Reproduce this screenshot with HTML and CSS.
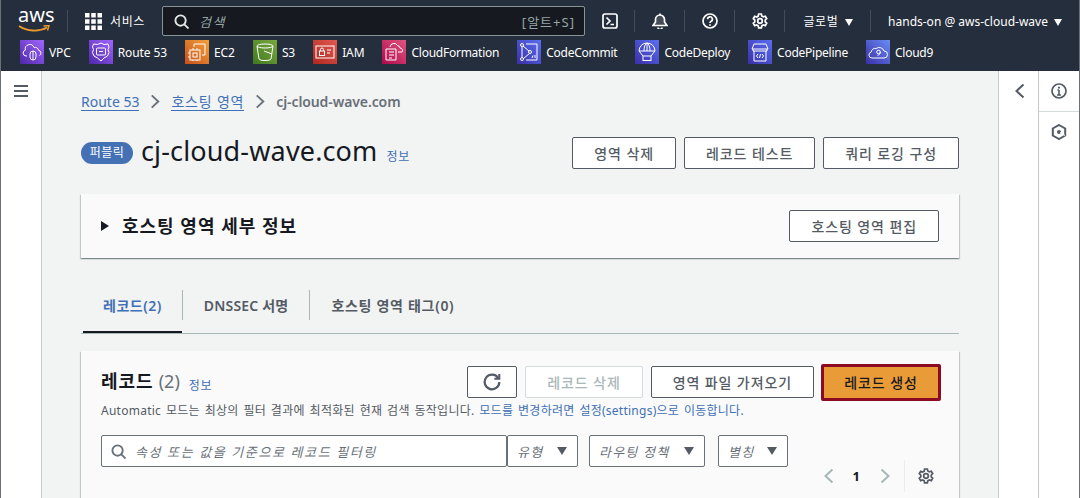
FILE: index.html
```html
<!DOCTYPE html>
<html lang="ko">
<head>
    <meta charset="UTF-8">
    <title>cj-cloud-wave.com - Route 53</title>
    <link rel="stylesheet" href="styles.css">
</head>
<body>
    <!-- 상단 내비게이션 -->
    <header class="topnav">
        <div class="nav-main">
            <div class="aws-logo">
                <span class="aws-word">aws</span>
                <svg class="aws-smile" viewBox="0 0 32 8"><path d="M1 1c8 5.500 20 6 28 1.500" fill="none" stroke="#ec9a2e" stroke-width="1.800"/><path d="M25.500 1 31 .6 29.500 5.500" fill="none" stroke="#ec9a2e" stroke-width="1.500"/></svg>
            </div>
            <span class="nav-sep sep-logo"></span>
            <svg class="grid-icon" viewBox="0 0 17 17" fill="#fff"><rect width="4.500" height="4.500"/><rect x="6.250" width="4.500" height="4.500"/><rect x="12.500" width="4.500" height="4.500"/><rect y="6.250" width="4.500" height="4.500"/><rect x="6.250" y="6.250" width="4.500" height="4.500"/><rect x="12.500" y="6.250" width="4.500" height="4.500"/><rect y="12.500" width="4.500" height="4.500"/><rect x="6.250" y="12.500" width="4.500" height="4.500"/><rect x="12.500" y="12.500" width="4.500" height="4.500"/></svg>
            <span class="services">서비스</span>
            <div class="nav-search">
                <svg class="search-icon" viewBox="0 0 16 16" fill="none" stroke="#e6e8e8" stroke-width="2"><circle cx="7" cy="7" r="5.500"/><path d="M11 11l4.500 4.500"/></svg>
                <span class="nav-search-text">검색</span>
                <span class="nav-search-key">[알트+S]</span>
            </div>
            <svg class="nav-icon icon-shell" viewBox="0 0 16 16" fill="none" stroke="#fff" stroke-width="1.700"><rect x="1" y="1" width="14" height="14" rx="2"/><path d="M4.500 4.500 8 8l-3.500 3.500M8.500 11.500H12"/></svg>
            <span class="nav-sep"></span>
            <svg class="nav-icon" viewBox="0 0 16 16" fill="none" stroke="#fff" stroke-width="1.700"><path d="M1 12.500h14L12.500 9V6.500a4.500 4.500 0 0 0-9 0V9z" fill="#fff" fill-opacity=".15"/><path d="M6 14.500a2 2 0 0 0 4 0"/><path d="M8 .5v1.500"/></svg>
            <span class="nav-sep"></span>
            <svg class="nav-icon" viewBox="0 0 16 16" fill="none" stroke="#fff" stroke-width="1.700"><circle cx="8" cy="8" r="7"/><path d="M5.600 6.200a2.400 2.400 0 1 1 3.500 2.100c-.8.400-1.100.8-1.100 1.700"/><path d="M8 11.200v1.600"/></svg>
            <span class="nav-sep"></span>
            <svg class="nav-icon" viewBox="0 0 16 16" fill="none" stroke="#fff" stroke-width="1.700"><circle cx="8" cy="8" r="2.300"/><path d="M6.600 1h2.800l.4 2 1.500.9 2-.7 1.400 2.400-1.500 1.400v1.800l1.500 1.400-1.400 2.400-2-.7-1.500.9-.4 2H6.600l-.4-2-1.500-.9-2 .7-1.400-2.400L2.800 8.900V7.100L1.300 5.700l1.400-2.400 2 .7 1.500-.9z"/></svg>
            <span class="nav-sep"></span>
            <span class="nav-menu region">글로벌 <i class="caret"></i></span>
            <span class="nav-sep"></span>
            <span class="nav-menu account">hands-on @ aws-cloud-wave <i class="caret"></i></span>
        </div>
        <div class="favorites">
            <a class="fav"><span class="svc svc-purple"><svg viewBox="0 0 24 24" fill="none" stroke="#fff"><path d="M7 16H6a3 3 0 0 1-.6-5.900A4.500 4.500 0 0 1 14 7.500a3.500 3.500 0 0 1 4.500 2.700 3 3 0 0 1 1 5.500"/><rect x="10" y="11" width="6" height="9" rx="3"/><path d="M13 11v9"/></svg></span>VPC</a>
            <a class="fav"><span class="svc svc-purple"><svg viewBox="0 0 24 24" fill="none" stroke="#fff"><path d="M12 3l3 1.500 4-.5 1 3-1 2.500 1 3-1.500 3.500-3.500 2L12 21l-3.500-3-3.500-2-1.500-3.500 1-3-1-2.500 1-3 4 .5z"/><rect x="7.500" y="8" width="9" height="7" rx="1"/><path d="M10 11.500h4"/></svg></span>Route 53</a>
            <a class="fav"><span class="svc svc-orange"><svg viewBox="0 0 24 24" fill="none" stroke="#fff"><rect x="5" y="10" width="10" height="10"/><rect x="8" y="13" width="4" height="4"/><path d="M9 7V4h11v11h-3M8 8v2M12 8v2M8 20v1M12 20v1M3 13h2M3 17h2"/></svg></span>EC2</a>
            <a class="fav"><span class="svc svc-green"><svg viewBox="0 0 24 24" fill="none" stroke="#fff"><ellipse cx="12" cy="6" rx="8" ry="2"/><path d="M4 6l2 13c.5 2 11.500 2 12 0l2-13"/><path d="M11 11l8 3"/></svg></span>S3</a>
            <a class="fav"><span class="svc svc-red"><svg viewBox="0 0 24 24" fill="none" stroke="#fff"><rect x="3" y="6" width="18" height="12"/><rect x="6.500" y="11" width="5" height="4.500"/><path d="M7.500 11V9.500a1.500 1.500 0 0 1 3 0V11M14 10h4M14 13h3"/></svg></span>IAM</a>
            <a class="fav fav-long"><span class="svc svc-pink"><svg viewBox="0 0 24 24" fill="none" stroke="#fff"><path d="M4 9h10v11H4zM7 12h5M7 15h5M7 18h3"/><path d="M8 7a4 4 0 0 1 7.500-1.500A3 3 0 0 1 18 8a2.500 2.500 0 0 1 2 4h-4"/></svg></span>CloudFormation</a>
            <a class="fav fav-long"><span class="svc svc-indigo"><svg viewBox="0 0 24 24" fill="none" stroke="#fff"><circle cx="5" cy="5" r="1.500"/><circle cx="5" cy="19" r="1.500"/><circle cx="13" cy="12" r="1.500"/><path d="M5 6.500v11M6 6l6 5M12.500 13.500l-6 5M9 4h11v16H9"/><path d="M15 18l1-2.500M18 15v3"/></svg></span>CodeCommit</a>
            <a class="fav fav-long"><span class="svc svc-indigo"><svg viewBox="0 0 24 24" fill="none" stroke="#fff"><path d="M4 11a8 8 0 0 1 16 0zM9 11c0-4 1-7 3-8 2 1 3 4 3 8M12 3v8M4 11l4 5M20 11l-4 5"/><rect x="8" y="16" width="8" height="4.500"/></svg></span>CodeDeploy</a>
            <a class="fav fav-long"><span class="svc svc-indigo"><svg viewBox="0 0 24 24" fill="none" stroke="#fff"><path d="M6 4h12l2 5H4zM5 9v2h14V9M6 11v10h12V11"/><path d="M10 14l-1.500 2 1.500 2M14 14l1.500 2-1.500 2M12.500 14l-1 4"/></svg></span>CodePipeline</a>
            <a class="fav fav-long"><span class="svc svc-blue"><svg viewBox="0 0 24 24" fill="none" stroke="#fff"><path d="M7 18H6a3 3 0 0 1-.8-5.900 4 4 0 0 1 5-3.600A5 5 0 0 1 18 11a3.500 3.500 0 0 1 0 7z"/><circle cx="12.500" cy="12" r="1.800"/><path d="M14.300 12c0 2-1 3-2.800 3.300"/></svg></span>Cloud9</a>
        </div>
    </header>

    <div class="shell">
        <aside class="sidenav">
            <span class="hamburger"></span>
        </aside>

        <main class="content">
            <nav class="breadcrumb">
                <a class="crumb-link">Route 53</a>
                <svg class="crumb-sep" viewBox="0 0 10 16"><path d="M1.500 1.500 8.500 8l-7 6.500" fill="none" stroke="#687078" stroke-width="2"/></svg>
                <a class="crumb-link">호스팅 영역</a>
                <svg class="crumb-sep" viewBox="0 0 10 16"><path d="M1.500 1.500 8.500 8l-7 6.500" fill="none" stroke="#687078" stroke-width="2"/></svg>
                <span class="crumb-current">cj-cloud-wave.com</span>
            </nav>

            <section class="page-head">
                <span class="badge">퍼블릭</span>
                <h1 class="page-title">cj-cloud-wave.com</h1>
                <a class="info-link">정보</a>
                <div class="page-actions">
                    <button class="btn">영역 삭제</button>
                    <button class="btn">레코드 테스트</button>
                    <button class="btn">쿼리 로깅 구성</button>
                </div>
            </section>

            <section class="card details">
                <i class="arrow-right"></i>
                <h2 class="details-title">호스팅 영역 세부 정보</h2>
                <button class="btn btn-edit">호스팅 영역 편집</button>
            </section>

            <div class="tabs">
                <a class="tab active">레코드(2)</a>
                <a class="tab">DNSSEC 서명</a>
                <a class="tab">호스팅 영역 태그(0)</a>
            </div>

            <section class="card records">
                <div class="records-head">
                    <h2 class="records-title">레코드</h2>
                    <span class="records-count">(2)</span>
                    <a class="info-link">정보</a>
                    <div class="records-actions">
                        <button class="btn btn-refresh"><svg viewBox="0 0 16 16" fill="none" stroke="#545b64" stroke-width="2"><path d="M13.500 4.500A6.500 6.500 0 1 0 14.500 8"/><path d="M14.500 .8v4.400h-4.400" stroke-width="1.800"/></svg></button>
                        <button class="btn btn-disabled">레코드 삭제</button>
                        <button class="btn">영역 파일 가져오기</button>
                        <button class="btn btn-primary">레코드 생성</button>
                    </div>
                </div>
                <p class="mode-note">Automatic 모드는 최상의 필터 결과에 최적화된 현재 검색 동작입니다. <a class="note-link">모드를 변경하려면 설정(settings)으로 이동합니다.</a></p>
                <div class="filters">
                    <div class="filter-input">
                        <svg class="filter-icon" viewBox="0 0 16 16" fill="none" stroke="#687078" stroke-width="2"><circle cx="7" cy="7" r="5.500"/><path d="M11 11l4.500 4.500"/></svg>
                        <span>속성 또는 값을 기준으로 레코드 필터링</span>
                    </div>
                    <div class="select sel-type">유형 <i class="caret-dark"></i></div>
                    <div class="select sel-route">라우팅 정책 <i class="caret-dark"></i></div>
                    <div class="select sel-alias">별칭 <i class="caret-dark"></i></div>
                </div>
                <div class="pager">
                    <svg class="pager-arrow" viewBox="0 0 10 16"><path d="M8.500 1.500 1.500 8l7 6.500" fill="none" stroke="#aab7b8" stroke-width="2"/></svg>
                    <span class="pager-num">1</span>
                    <svg class="pager-arrow" viewBox="0 0 10 16"><path d="M1.500 1.500 8.500 8l-7 6.500" fill="none" stroke="#aab7b8" stroke-width="2"/></svg>
                    <span class="pager-sep"></span>
                    <svg class="pager-gear" viewBox="0 0 16 16" fill="none" stroke="#545b64" stroke-width="1.700"><circle cx="8" cy="8" r="2.300"/><path d="M6.600 1h2.800l.4 2 1.500.9 2-.7 1.400 2.400-1.500 1.400v1.800l1.500 1.400-1.400 2.400-2-.7-1.500.9-.4 2H6.600l-.4-2-1.500-.9-2 .7-1.400-2.400L2.800 8.900V7.100L1.300 5.700l1.400-2.400 2 .7 1.500-.9z"/></svg>
                </div>
            </section>
        </main>

        <aside class="split-panel">
            <svg class="panel-chevron" viewBox="0 0 10 16"><path d="M8.500 1.500 1.500 8l7 6.500" fill="none" stroke="#545b64" stroke-width="2"/></svg>
        </aside>
        <aside class="tools">
            <div class="tool-top">
                <svg class="tool-icon" viewBox="0 0 16 16" fill="none" stroke="#545b64" stroke-width="1.700"><circle cx="8" cy="8" r="7"/><path d="M8 7v5M6 12h4M6.500 7H8" stroke-width="1.600"/><path d="M8 3.800v1.600" stroke-width="2"/></svg>
            </div>
            <div class="tool-bottom">
                <svg class="tool-icon" viewBox="0 0 16 16" fill="none" stroke="#545b64" stroke-width="2"><path d="M8 1l6.200 3.500v7L8 15l-6.200-3.500v-7z"/><circle cx="8" cy="8" r="2" fill="#545b64" stroke="none"/><path d="M9 8.500l5 3" stroke="#fff" stroke-width="1"/></svg>
            </div>
        </aside>
    </div>
</body>
</html>
```

FILE: styles.css
```css
* {
    box-sizing: border-box;
}

html, body {
    margin: 0;
    height: 100%;
    overflow: hidden;
}

body {
    display: flex;
    flex-direction: column;
    border-left: 1px solid #6b7077;
    border-right: 1px solid #6b7077;
    background: #fff;
    color: #16191f;
    font-family: "Noto Sans", "Noto Sans CJK KR", sans-serif;
    font-size: 14px;
}

/* 상단 내비게이션 */
.topnav {
    flex: none;
    height: 71px;
    background: #252e3c;
    color: #fff;
}

.nav-main {
    display: flex;
    align-items: center;
    height: 40px;
    padding: 2px 0 0 17px;
}

.aws-logo {
    display: flex;
    flex-direction: column;
    width: 33px;
    height: 30px;
    margin-top: -2px;
}

.aws-word {
    height: 20px;
    font-size: 20px;
    line-height: 20px;
    text-align: center;
}

.aws-smile {
    width: 32px;
    height: 8px;
}

.nav-sep {
    flex: none;
    width: 1px;
    height: 22px;
    background: #414d5c;
}

.sep-logo {
    margin-left: 16px;
}

.grid-icon {
    width: 17px;
    height: 17px;
    margin-left: 17px;
}

.services {
    margin-left: 8px;
    font-size: 12px;
    letter-spacing: .6px;
}

.nav-search {
    display: flex;
    align-items: center;
    width: 423px;
    height: 30px;
    margin-left: 17px;
    padding: 0 9px 0 11px;
    background: #16191f;
    border: 1px solid #879596;
    border-radius: 2px;
}

.search-icon {
    width: 15px;
    height: 15px;
}

.nav-search-text {
    margin-left: 10px;
    color: #95a5a6;
    font-size: 13px;
    font-style: italic;
    letter-spacing: 1.500px;
}

.nav-search-key {
    margin-left: auto;
    color: #95a5a6;
    font-size: 13px;
    letter-spacing: 1px;
}

.nav-icon {
    width: 16px;
    height: 16px;
    margin: 0 16.5px;
}

.icon-shell {
    margin-left: 17px;
}

.nav-menu {
    white-space: nowrap;
    font-size: 12px;
}

.region {
    margin: 0 17px 0 18px;
    letter-spacing: .6px;
}

.account {
    margin-left: 17px;
}

.caret {
    display: inline-block;
    width: 0;
    height: 0;
    margin-left: 3px;
    border-left: 4.5px solid transparent;
    border-right: 4.5px solid transparent;
    border-top: 7px solid #fff;
}

.favorites {
    display: flex;
    align-items: center;
    gap: 18px;
    height: 31px;
    padding: 0 0 7px 19px;
}

.fav {
    display: flex;
    align-items: center;
    gap: 5px;
    font-size: 12px;
    font-weight: 400;
    letter-spacing: -.1px;
    white-space: nowrap;
}

.fav-long {
    letter-spacing: -.25px;
}

.svc {
    display: block;
    width: 24px;
    height: 24px;
}

.svc svg {
    display: block;
    width: 24px;
    height: 24px;
}

.svc-purple { background: linear-gradient(45deg, #4d27a8, #a166ff); }
.svc-orange { background: linear-gradient(45deg, #c8511b, #f2a13a); }
.svc-green { background: linear-gradient(45deg, #3f7a1f, #7aa73f); }
.svc-red { background: linear-gradient(45deg, #b0281f, #e05a52); }
.svc-pink { background: linear-gradient(45deg, #b0084d, #e0567f); }
.svc-indigo { background: linear-gradient(45deg, #3a2fa8, #5a6ff0); }
.svc-blue { background: linear-gradient(45deg, #3a2fa8, #6a8cf5); }

/* 본문 영역 */
.shell {
    flex: 1;
    display: flex;
    min-height: 0;
    overflow: hidden;
}

.sidenav {
    flex: none;
    width: 41px;
    padding: 14px 0 0 13px;
    background: #fff;
    border-right: 1px solid #c4c8c8;
}

.hamburger {
    display: block;
    width: 14px;
    height: 12px;
    border-top: 2px solid #545b64;
    border-bottom: 2px solid #545b64;
    position: relative;
}

.hamburger::after {
    content: "";
    position: absolute;
    left: 0;
    right: 0;
    top: 3px;
    height: 2px;
    background: #545b64;
}

.content {
    flex: none;
    width: 956px;
    padding: 20px 39px 0;
    background: #f2f3f3;
}

.breadcrumb {
    display: flex;
    align-items: center;
    height: 21px;
}

.crumb-link {
    color: #4070b5;
    font-size: 14px;
    letter-spacing: .8px;
    border-bottom: 1px solid #4070b5;
    line-height: 17px;
}

.crumb-link:first-child {
    letter-spacing: 0;
}

.crumb-sep {
    width: 10px;
    height: 15px;
    margin: 0 11px;
}

.crumb-current {
    color: #687078;
    font-size: 14px;
    font-weight: 600;
    letter-spacing: -.1px;
}

.page-head {
    display: flex;
    align-items: center;
    height: 32px;
    margin-top: 25px;
}

.badge {
    flex: none;
    width: 52px;
    height: 22px;
    background: #4470b4;
    border-radius: 11px;
    color: #fff;
    font-size: 12px;
    letter-spacing: .5px;
    line-height: 21px;
    text-align: center;
}

.page-title {
    margin: -5px 0 0 8px;
    font-size: 27px;
    font-weight: 400;
    letter-spacing: .15px;
    white-space: nowrap;
}

.info-link {
    flex: none;
    margin: 5px 0 0 9px;
    color: #4070b5;
    font-size: 12px;
    letter-spacing: .6px;
}

.page-actions {
    display: flex;
    gap: 8px;
    margin-left: auto;
}

.btn {
    height: 32px;
    padding: 0 21px;
    background: #fff;
    border: 1px solid #545b64;
    border-radius: 2px;
    color: #545b64;
    font-family: inherit;
    font-size: 14px;
    font-weight: 500;
    letter-spacing: .9px;
    white-space: nowrap;
}

.card {
    background: #fafafa;
    box-shadow: 0 1px 1px 0 rgba(0, 28, 36, .3), 1px 1px 1px 0 rgba(0, 28, 36, .15), -1px 1px 1px 0 rgba(0, 28, 36, .15);
}

.details {
    display: flex;
    align-items: center;
    height: 64px;
    margin-top: 25px;
    padding: 0 20px;
}

.arrow-right {
    width: 0;
    height: 0;
    border-top: 5px solid transparent;
    border-bottom: 5px solid transparent;
    border-left: 8px solid #16191f;
}

.details-title {
    margin: -2px 0 0 13px;
    font-size: 18px;
    font-weight: 700;
    letter-spacing: 1px;
}

.btn-edit {
    margin-left: auto;
}

.tabs {
    display: flex;
    align-items: stretch;
    height: 44px;
    margin-top: 32px;
    border-bottom: 1px solid #aab7b8;
}

.tab {
    display: flex;
    align-items: center;
    height: 30px;
    padding: 0 21px;
    border-right: 1px solid #aab7b8;
    color: #545b64;
    font-size: 14px;
    font-weight: 600;
    letter-spacing: .2px;
}

.tab:last-child {
    border-right: 0;
    letter-spacing: .7px;
}

.tab.active {
    color: #4070b5;
    margin-left: 2px;
    padding: 0 20px;
    position: relative;
    letter-spacing: .5px;
}

.tab.active::after {
    content: "";
    position: absolute;
    left: 0;
    right: 0;
    top: 41px;
    height: 2px;
    background: #16191f;
}

.records {
    height: 200px;
    margin-top: 17px;
    padding: 15px 18px 0 20px;
}

.records-head {
    display: flex;
    align-items: center;
    height: 32px;
}

.records-title {
    margin: -4px 0 0;
    font-size: 18px;
    font-weight: 700;
    letter-spacing: 1px;
    white-space: nowrap;
}

.records-count {
    margin: -3px 0 0 5px;
    color: #687078;
    font-size: 18px;
}

.records-actions {
    display: flex;
    align-items: center;
    gap: 8px;
    margin-left: auto;
}

.btn-refresh {
    display: flex;
    align-items: center;
    justify-content: center;
    width: 50px;
    padding: 0;
}

.btn-refresh svg {
    width: 18px;
    height: 18px;
}

.btn-disabled {
    border-color: #d5dbdb;
    color: #aab7b8;
}

.btn-primary {
    height: 37px;
    width: 120px;
    padding: 0;
    margin-left: -1px;
    background: #e99b37;
    border: 3px solid #8c0b22;
    color: #16191f;
}

.mode-note {
    margin: 4px 0 0;
    color: #545b64;
    font-size: 12px;
    letter-spacing: .25px;
    word-spacing: 1.500px;
    line-height: 18px;
    white-space: nowrap;
}

.note-link {
    color: #4070b5;
}

.filters {
    display: flex;
    margin-top: 15px;
}

.filter-input {
    display: flex;
    flex: none;
    align-items: center;
    width: 406px;
    height: 32px;
    padding-left: 9px;
    background: #fff;
    border: 1px solid #687078;
    border-radius: 2px;
    color: #687078;
    font-size: 13px;
    font-style: italic;
    letter-spacing: 1.600px;
    white-space: nowrap;
}

.filter-icon {
    width: 15px;
    height: 15px;
    margin-right: 9px;
}

.select {
    display: flex;
    flex: none;
    align-items: center;
    justify-content: space-between;
    height: 32px;
    padding: 0 10px 0 9px;
    background: #fff;
    border: 1px solid #687078;
    border-radius: 2px;
    color: #687078;
    font-size: 13px;
    font-style: italic;
    letter-spacing: 1.200px;
    white-space: nowrap;
}

.sel-type {
    width: 71px;
}

.sel-route {
    width: 116px;
    margin-left: 11px;
}

.sel-alias {
    width: 70px;
    margin-left: 13px;
}

.caret-dark {
    width: 0;
    height: 0;
    border-left: 5.5px solid transparent;
    border-right: 5.5px solid transparent;
    border-top: 8px solid #545b64;
}

.pager {
    display: flex;
    align-items: center;
    justify-content: flex-end;
    height: 32px;
    margin: -7px 7px 0 0;
}

.pager-arrow {
    width: 10px;
    height: 16px;
}

.pager-num {
    margin: 0 20px 0 19px;
    font-size: 13px;
    font-weight: 700;
}

.pager-sep {
    width: 1px;
    height: 32px;
    margin: 0 13px 0 14px;
    background: #eaeded;
}

.pager-gear {
    width: 16px;
    height: 16px;
}

/* 오른쪽 패널 */
.split-panel {
    flex: none;
    width: 41px;
    padding: 12px 0 0 16px;
    border-left: 1px solid #c4c8c8;
    border-right: 1px solid #c4c8c8;
}

.panel-chevron {
    display: block;
    width: 10px;
    height: 16px;
}

.tools {
    flex: none;
    width: 40px;
}

.tool-top {
    height: 41px;
    padding-top: 12px;
    border-bottom: 1px solid #d5dbdb;
    text-align: center;
}

.tool-bottom {
    padding-top: 12px;
    text-align: center;
}

.tool-icon {
    width: 16px;
    height: 16px;
}
```
